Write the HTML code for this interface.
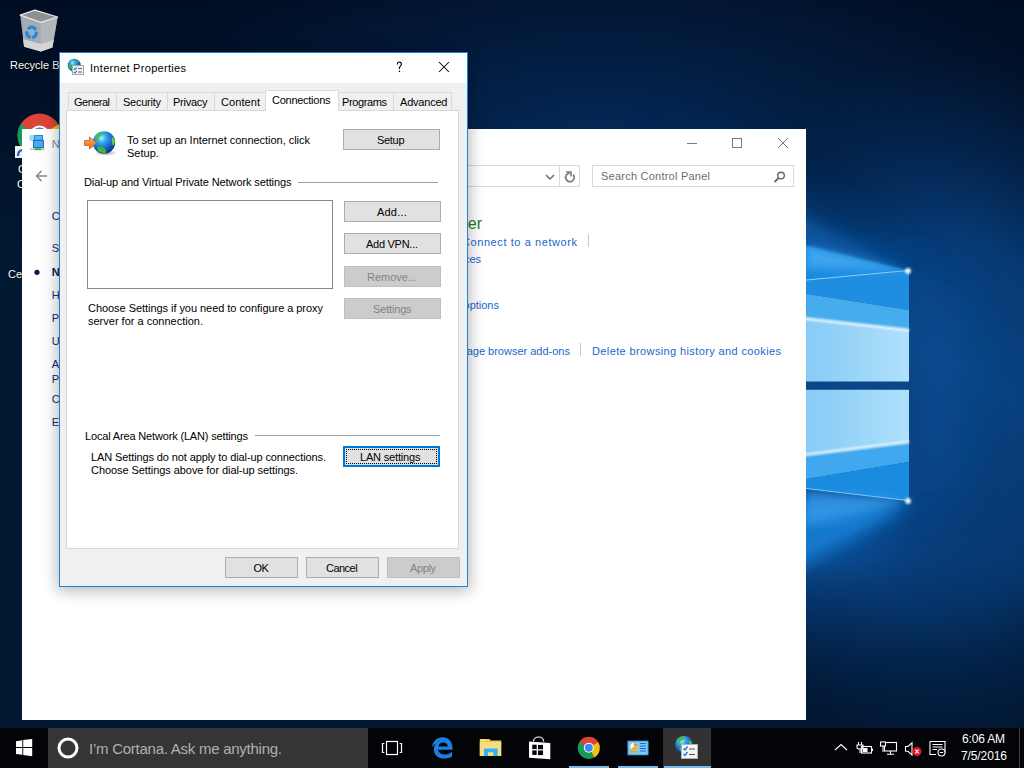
<!DOCTYPE html>
<html><head><meta charset="utf-8"><title>Internet Properties</title>
<style>
html,body{margin:0;padding:0;width:1024px;height:768px;overflow:hidden;background:#02122c;font-family:"Liberation Sans",sans-serif;}
.L{position:absolute;left:0;top:0;width:1024px;height:768px;}
.t{position:absolute;white-space:pre;font-family:"Liberation Sans",sans-serif;}
.b{position:absolute;box-sizing:border-box;}
svg{position:absolute;left:0;top:0;}
</style></head><body>
<!-- DESKTOP -->
<div class="L" id="desk">
<svg width="1024" height="768" viewBox="0 0 1024 768">
<defs>
<radialGradient id="bg1" cx="900" cy="420" r="720" gradientTransform="translate(900 420) scale(0.75 1) translate(-900 -420)" gradientUnits="userSpaceOnUse">
<stop offset="0" stop-color="#0a4688"/><stop offset="0.22" stop-color="#073872"/><stop offset="0.45" stop-color="#04244e"/><stop offset="0.7" stop-color="#02142e"/><stop offset="1" stop-color="#010b1e"/>
</radialGradient>
<filter id="blur2" x="-100%" y="-100%" width="300%" height="300%" filterUnits="objectBoundingBox"><feGaussianBlur stdDeviation="1.2"/></filter>
<filter id="blur8" x="-100%" y="-100%" width="300%" height="300%" filterUnits="objectBoundingBox"><feGaussianBlur stdDeviation="8"/></filter>
<filter id="blur40" x="-100%" y="-100%" width="300%" height="300%" filterUnits="objectBoundingBox"><feGaussianBlur stdDeviation="40"/></filter>
<filter id="blur4" x="-100%" y="-100%" width="300%" height="300%"><feGaussianBlur stdDeviation="4"/></filter>
<filter id="blur10" x="-100%" y="-100%" width="300%" height="300%"><feGaussianBlur stdDeviation="10"/></filter>
<filter id="blur20" x="-100%" y="-100%" width="300%" height="300%" filterUnits="objectBoundingBox"><feGaussianBlur stdDeviation="22"/></filter>
<linearGradient id="beamDown" x1="0" y1="0" x2="0" y2="1"><stop offset="0" stop-color="#1a86dc"/><stop offset="1" stop-color="#0a4f98" stop-opacity="0"/></linearGradient>
</defs>
<defs>
<radialGradient id="rg1" cx="940" cy="420" r="320" gradientTransform="translate(940 420) scale(0.85 1.15) translate(-940 -420)" gradientUnits="userSpaceOnUse"><stop offset="0" stop-color="#0a4a8c"/><stop offset="0.5" stop-color="#073e7c" stop-opacity="0.9"/><stop offset="1" stop-color="#03224e" stop-opacity="0"/></radialGradient>
<radialGradient id="rg2" cx="600" cy="160" r="420" gradientTransform="translate(600 160) scale(1.2 0.6) translate(-600 -160)" gradientUnits="userSpaceOnUse"><stop offset="0" stop-color="#052f64" stop-opacity="0.9"/><stop offset="1" stop-color="#03224e" stop-opacity="0"/></radialGradient>
<radialGradient id="rg3" cx="820" cy="520" r="230" gradientTransform="translate(820 520) scale(1.1 0.8) translate(-820 -520)" gradientUnits="userSpaceOnUse"><stop offset="0" stop-color="#0c5cac"/><stop offset="0.4" stop-color="#083f7e" stop-opacity="0.8"/><stop offset="1" stop-color="#042a5a" stop-opacity="0"/></radialGradient>
<linearGradient id="lgB" x1="0" y1="560" x2="0" y2="728" gradientUnits="userSpaceOnUse"><stop offset="0" stop-color="#011530" stop-opacity="0"/><stop offset="1" stop-color="#011530" stop-opacity="0.5"/></linearGradient>
</defs>
<linearGradient id="lgBase" x1="0" y1="0" x2="0" y2="260" gradientUnits="userSpaceOnUse"><stop offset="0" stop-color="#010d22"/><stop offset="1" stop-color="#011831"/></linearGradient>
<rect width="1024" height="768" fill="url(#lgBase)"/>
<rect width="1024" height="768" fill="url(#rg2)"/>
<rect width="1024" height="768" fill="url(#rg1)"/>
<rect width="1024" height="768" fill="url(#rg3)"/>
<rect x="700" y="560" width="324" height="168" fill="url(#lgB)"/>
<polygon points="909,272 700,140 600,200 909,300" fill="#0b5aa8" opacity="0.55" filter="url(#blur20)"/>
<!-- beams to the left of logo -->
<polygon points="909,271 700,170 700,250" fill="#0e62b5" opacity="0.7" filter="url(#blur8)"/>
<polygon points="909,265 960,290 960,480 909,510" fill="#0b52a0" opacity="0.45" filter="url(#blur20)"/>
<polygon points="909,501 700,500 700,625" fill="#1e88e4" opacity="0.85" filter="url(#blur10)"/>
<polygon points="700,220 909,270.4 700,300" fill="#1f90e8" opacity="0.95" filter="url(#blur2)"/>
<polygon points="700,512 909,500.7 700,610" fill="url(#beamDown)" filter="url(#blur8)"/>
<!-- upper pane -->
<polygon points="700,290 909,270.4 909,310 700,277" fill="#1f8ee0"/>
<polygon points="700,277 909,310 909,330 700,307" fill="#45acee"/>
<linearGradient id="lp" x1="806" y1="0" x2="909" y2="0" gradientUnits="userSpaceOnUse"><stop offset="0" stop-color="#86cbf6"/><stop offset="1" stop-color="#b0e0fb"/></linearGradient>
<polygon points="700,307 909,330 909,381.7 700,381.7" fill="url(#lp)"/>
<line x1="700" y1="307" x2="909" y2="330" stroke="#f0faff" stroke-width="2.6" filter="url(#blur2)"/>
<line x1="700" y1="290" x2="909" y2="270.4" stroke="#a8e0ff" stroke-width="1" opacity="0.8"/>
<rect x="700" y="381.7" width="209" height="8.1" fill="#0a4688"/>
<!-- lower pane -->
<polygon points="700,389.8 909,389.8 909,442 700,468" fill="url(#lp)"/>
<polygon points="700,468 909,442 909,462 700,497" fill="#40a8ee"/>
<polygon points="700,497 909,462 909,500.7 700,476" fill="#1a8ce0"/>
<line x1="700" y1="468" x2="909" y2="442" stroke="#f0faff" stroke-width="2.6" filter="url(#blur2)"/>
<line x1="700" y1="476" x2="909" y2="500.7" stroke="#a8e0ff" stroke-width="1" opacity="0.8"/>
<!-- right vertical edge -->
<line x1="909" y1="270" x2="909" y2="501" stroke="#cfefff" stroke-width="1.6" filter="url(#blur2)"/>
<circle cx="908" cy="271" r="3" fill="#fff" opacity="0.9" filter="url(#blur2)"/><polygon points="909,271 806,246 806,268" fill="#5ab8f5" opacity="0.55" filter="url(#blur4)"/><path d="M890,270.5 H925" stroke="#dff4ff" stroke-width="1" opacity="0.7" filter="url(#blur2)"/>
<circle cx="908" cy="501" r="3" fill="#fff" opacity="0.9" filter="url(#blur2)"/><polygon points="909,501 806,492 806,525" fill="#4aa8f0" opacity="0.5" filter="url(#blur4)"/><path d="M880,501 H930" stroke="#e8f8ff" stroke-width="1.5" opacity="0.8" filter="url(#blur2)"/>
<!-- recycle bin -->
<polygon points="20.2,15.1 34.9,10.2 57.6,17 52.4,47.6 40.7,51.5 24.1,46.7" fill="#a6aaaf"/>
<polygon points="40.7,22.3 57.6,17 52.4,47.6 40.7,51.5" fill="#b3b6ba"/>
<polygon points="20.2,15.1 34.9,10.2 57.6,17 40.7,22.3" fill="#8b9095"/>
<polygon points="23,39 40.7,44 53.6,40 52.4,47.6 40.7,51.5 24.1,46.7" fill="#d3d5d8"/>
<polygon points="20.2,15.1 34.9,10.2 57.6,17 40.7,22.3" fill="none" stroke="#e6e8ea" stroke-width="1.3" stroke-linejoin="round"/>
<g fill="none" stroke="#1a8ae8" stroke-width="3.2" stroke-linecap="round">
<path d="M28.8,28.2 A5,5 0 0 1 35.2,28.8"/>
<path d="M26.8,32.5 A5,5 0 0 0 29.5,37"/>
<path d="M33.5,37.3 A5,5 0 0 0 36.3,33.2"/>
</g>
<!-- chrome icon (partial) -->
<circle cx="39.5" cy="135.5" r="22" fill="#db4437"/>
<path d="M39.5,135.5 L58.5,124.5 A22,22 0 0 1 50.5,154.5 Z" fill="#f4c20d"/>
<path d="M39.5,135.5 L50.5,154.5 A22,22 0 0 1 20.5,124.5 Z" fill="#0f9d58"/>
<circle cx="39.5" cy="135.5" r="10" fill="#fff"/>
<circle cx="39.5" cy="135.5" r="8" fill="#4a7fd8"/>
<!-- shortcut overlay -->
<rect x="15" y="146" width="8" height="12" fill="#f0f0f0"/>
<path d="M18,156 q0,-5 4,-6" stroke="#1e5bb8" stroke-width="2.2" fill="none"/>
<!-- desktop side letters -->
</svg>
<div class="t" style="left:10px;top:60px;font-size:11px;line-height:11px;color:#fff;text-shadow:0 0 2px #000,1px 1px 1px #000;">Recycle Bin</div>
<div class="t" style="left:18px;top:164px;font-size:11px;line-height:11px;color:#fff;text-shadow:0 0 2px #000;">Google</div>
<div class="t" style="left:17px;top:179px;font-size:11px;line-height:11px;color:#fff;text-shadow:0 0 2px #000;">Chrome</div>
<div class="t" style="left:8px;top:269px;font-size:11px;line-height:11px;color:#fff;text-shadow:0 0 2px #000;">Certificates</div>
</div>
<!-- CONTROL PANEL -->
<div class="L" id="cp" style="clip-path:inset(129px 218px 48px 22px);">
<div class="b" style="left:22px;top:129px;width:784px;height:591px;background:#fff;"></div>
<svg width="1024" height="768" style="left:0;top:0">
<!-- cp title icon -->
<circle cx="32.5" cy="138" r="3.2" fill="#8fd0f4" opacity="0.9"/>
<rect x="34.5" y="135.5" width="8" height="4.5" fill="#5ab8f2" stroke="#2a84d6"/>
<rect x="33.5" y="140.5" width="10" height="7" fill="#4aa8ee" stroke="#1e70c8"/>
<rect x="30" y="148.3" width="15" height="1.8" fill="#c8c8c8"/>
<rect x="34.5" y="148.3" width="7" height="1.8" fill="#36b336"/>
<!-- back arrow -->
<path d="M36.5,176 H47 M41.5,171 L36.5,176 L41.5,181" stroke="#8a8a8a" stroke-width="1.6" fill="none"/>
<!-- title buttons -->
<path d="M687,143.5 H697" stroke="#7a7a7a" stroke-width="1"/>
<rect x="732.5" y="138.5" width="9" height="9" fill="none" stroke="#7a7a7a" stroke-width="1"/>
<path d="M778,138 L788,148 M788,138 L778,148" stroke="#7a7a7a" stroke-width="1"/>
<!-- address bar -->
<rect x="100.5" y="165.5" width="479" height="21" fill="#fff" stroke="#d9d9d9"/>
<path d="M559.5,166 V186" stroke="#d9d9d9"/>
<path d="M546,175 L550,179 L554,175" stroke="#6a6a6a" stroke-width="1.5" fill="none"/>
<path d="M573.2,174.6 A4.3,4.3 0 1 1 569.6,173.1" stroke="#7a7a7a" stroke-width="1.7" fill="none"/>
<path d="M566.2,172 H571 V176.5" stroke="#7a7a7a" stroke-width="1.5" fill="none"/>
<!-- search box -->
<rect x="592.5" y="165.5" width="201" height="21" fill="#fff" stroke="#d9d9d9"/>
<circle cx="781" cy="175.5" r="3.3" stroke="#6a6a6a" stroke-width="1.5" fill="none"/>
<path d="M778.6,178 L774.5,182" stroke="#6a6a6a" stroke-width="1.8"/>
<!-- separators -->
<path d="M588.5,234 V247 M580.5,343 V356" stroke="#c8c8c8"/>
<!-- nav bullet -->
<circle cx="37" cy="272.3" r="2.6" fill="#141450"/>
</svg>
<div class="t" style="left:51.8px;top:139px;font-size:11px;line-height:11px;color:#8a8a8a;">Network and Internet</div>
<div class="t" style="left:51.8px;top:211px;font-size:11px;line-height:11px;color:#20246e;letter-spacing:-0.4px;">Control Panel Home</div>
<div class="t" style="left:51.8px;top:243px;font-size:11px;line-height:11px;color:#20246e;letter-spacing:-0.4px;">System and Security</div>
<div class="t" style="left:51.8px;top:267px;font-size:11px;line-height:11px;color:#141450;font-weight:bold;">Network and Internet</div>
<div class="t" style="left:51.8px;top:290px;font-size:11px;line-height:11px;color:#20246e;letter-spacing:-0.4px;">Hardware and Sound</div>
<div class="t" style="left:51.8px;top:313px;font-size:11px;line-height:11px;color:#20246e;letter-spacing:-0.4px;">Programs</div>
<div class="t" style="left:51.8px;top:336px;font-size:11px;line-height:11px;color:#20246e;letter-spacing:-0.4px;">User Accounts</div>
<div class="t" style="left:51.8px;top:359px;font-size:11px;line-height:11px;color:#20246e;letter-spacing:-0.4px;">Appearance and</div>
<div class="t" style="left:51.8px;top:374px;font-size:11px;line-height:11px;color:#20246e;letter-spacing:-0.4px;">Personalization</div>
<div class="t" style="left:51.8px;top:394px;font-size:11px;line-height:11px;color:#20246e;letter-spacing:-0.4px;">Clock, Language, and Region</div>
<div class="t" style="left:51.8px;top:417px;font-size:11px;line-height:11px;color:#20246e;letter-spacing:-0.4px;">Ease of Access</div>
<div class="t" style="right:542px;top:216px;font-size:16px;line-height:16px;color:#1e7b1e;">Network and Sharing Center</div>
<div class="t" style="left:462px;top:237px;font-size:11px;line-height:11px;color:#1a66d0;letter-spacing:0.581px;">Connect to a network</div>
<div class="t" style="right:543px;top:254px;font-size:11px;line-height:11px;color:#1a66d0;">View network computers and devices</div>
<div class="t" style="right:525px;top:300px;font-size:11px;line-height:11px;color:#1a66d0;">Choose homegroup and sharing options</div>
<div class="t" style="right:454px;top:346px;font-size:11px;line-height:11px;color:#1a66d0;">Manage browser add-ons</div>
<div class="t" style="left:592px;top:346px;font-size:11px;line-height:11px;color:#1a66d0;letter-spacing:0.380px;">Delete browsing history and cookies</div>
<div class="t" style="left:601px;top:171px;font-size:11px;line-height:11px;color:#6d6d6d;letter-spacing:0.234px;">Search Control Panel</div>
</div>
<!-- DIALOG -->
<div class="b" style="left:59px;top:52px;width:409px;height:535px;box-shadow:0 2px 14px 2px rgba(0,0,0,0.28);"></div>
<div class="L" id="dlg">
<div class="b" style="left:59px;top:52px;width:409px;height:535px;border:1px solid #1883d7;background:#f0f0f0;"></div>
<div class="b" style="left:60px;top:53px;width:407px;height:30px;background:#fff;"></div>
<!-- title icon -->
<svg width="1024" height="768" style="left:0;top:0">
<defs>
<radialGradient id="gl" cx="0.38" cy="0.32" r="0.7"><stop offset="0" stop-color="#9ee6ff"/><stop offset="0.35" stop-color="#2aa0e8"/><stop offset="0.8" stop-color="#1450b0"/><stop offset="1" stop-color="#0b2f7a"/></radialGradient>
<linearGradient id="arr" x1="0" y1="0" x2="0" y2="1"><stop offset="0" stop-color="#ffb070"/><stop offset="1" stop-color="#e8661a"/></linearGradient>
</defs>
<!-- title globe -->
<circle cx="74.2" cy="65.2" r="6.5" fill="url(#gl)"/>
<path d="M68.5,66 q1.5,-2 3.5,-1 q1,2 0,4 q-2,1 -3,-1z M75,60 q3,0 4,2 q-1,1 -3,0z" fill="#3cb43c"/>
<rect x="72.5" y="65.5" width="11" height="9" fill="#f0f0f0" stroke="#a8a8a8"/>
<path d="M74,68.5 l1,1 l1.8,-2.2 M74,72 l1,1 l1.8,-2.2" stroke="#1e7ad8" stroke-width="1.1" fill="none"/>
<path d="M78,68.5h4 M78,72h4" stroke="#6a6a6a" stroke-width="1"/>
<!-- help ? -->
<path d="M397.3,64.6 C397.3,62.8 398.3,62 399.4,62 C400.6,62 401.4,62.9 401.4,64.2 C401.4,65.7 399.4,66.3 399.4,68.2 L399.4,69" stroke="#000" stroke-width="1.1" fill="none"/>
<rect x="398.8" y="70.6" width="1.3" height="1.4" fill="#000"/>
<!-- close X -->
<path d="M439,62 L449,72 M449,62 L439,72" stroke="#000" stroke-width="1.05"/>
</svg>
<!-- tabs -->
<div class="b" style="left:68px;top:92px;width:49px;height:19px;border:1px solid #d9d9d9;border-bottom:0;background:#f0f0f0;"></div>
<div class="b" style="left:116px;top:92px;width:52px;height:19px;border:1px solid #d9d9d9;border-bottom:0;background:#f0f0f0;"></div>
<div class="b" style="left:167px;top:92px;width:48px;height:19px;border:1px solid #d9d9d9;border-bottom:0;background:#f0f0f0;"></div>
<div class="b" style="left:214px;top:92px;width:52px;height:19px;border:1px solid #d9d9d9;border-bottom:0;background:#f0f0f0;"></div>
<div class="b" style="left:338px;top:92px;width:56px;height:19px;border:1px solid #d9d9d9;border-bottom:0;background:#f0f0f0;"></div>
<div class="b" style="left:393px;top:92px;width:59px;height:19px;border:1px solid #d9d9d9;border-bottom:0;background:#f0f0f0;"></div>
<div class="b" style="left:66px;top:110px;width:393px;height:439px;border:1px solid #d9d9d9;background:#fff;"></div>
<div class="b" style="left:265px;top:90px;width:74px;height:21px;border:1px solid #d9d9d9;border-bottom:0;background:#fff;"></div>
<!-- setup globe -->
<svg width="1024" height="768" style="left:0;top:0">
<defs>
<radialGradient id="gl2" cx="0.38" cy="0.3" r="0.75"><stop offset="0" stop-color="#b0f0ff"/><stop offset="0.3" stop-color="#30a8ea"/><stop offset="0.75" stop-color="#1550b8"/><stop offset="1" stop-color="#0a2a78"/></radialGradient>
<radialGradient id="sh" cx="0.5" cy="0.5" r="0.5"><stop offset="0" stop-color="#000" stop-opacity="0.35"/><stop offset="1" stop-color="#000" stop-opacity="0"/></radialGradient>
</defs>
<ellipse cx="106" cy="153" rx="12" ry="3" fill="url(#sh)"/>
<circle cx="104" cy="142.5" r="11.2" fill="url(#gl2)"/>
<path d="M95,137 q3,-5 7,-5 q2,2 -1,4 q-3,1 -2,4 q-2,1 -4,-3z" fill="#44c040" opacity="0.9"/>
<path d="M97,147 q4,-1 7,1 q3,2 2,5 q-4,1 -8,-2z" fill="#3fb43a"/>
<path d="M112,137 q3,1 3,5 q-1,3 -2,4 q-2,-4 -1,-9z" fill="#5ccc40"/>
<path d="M84.5,140.5 h5 v-3.5 l7,6 l-7,6 v-3.5 h-5z" fill="url(#arr)" stroke="#d0581a" stroke-width="0.8"/>
</svg>
<!-- setup text row / separators -->
<div class="b" style="left:298px;top:182px;width:140px;height:1px;background:#a0a0a0;"></div>
<div class="b" style="left:255px;top:435px;width:185px;height:1px;background:#a0a0a0;"></div>
<!-- list box -->
<div class="b" style="left:87px;top:200px;width:246px;height:89px;border:1px solid #828790;background:#fff;"></div>
<!-- buttons -->
<div class="b" style="left:343px;top:129px;width:97px;height:21px;border:1px solid #adadad;background:#e1e1e1;"></div>
<div class="b" style="left:344px;top:201px;width:97px;height:21px;border:1px solid #adadad;background:#e1e1e1;"></div>
<div class="b" style="left:344px;top:233px;width:97px;height:21px;border:1px solid #adadad;background:#e1e1e1;"></div>
<div class="b" style="left:344px;top:266px;width:97px;height:21px;border:1px solid #bfbfbf;background:#cccccc;"></div>
<div class="b" style="left:344px;top:298px;width:97px;height:21px;border:1px solid #bfbfbf;background:#cccccc;"></div>
<div class="b" style="left:343px;top:446px;width:97px;height:21px;border:2px solid #0078d7;background:#e1e1e1;"></div>
<div class="b" style="left:346px;top:449px;width:91px;height:15px;border:1px dotted #000;"></div>
<div class="b" style="left:225px;top:557px;width:73px;height:21px;border:1px solid #adadad;background:#e1e1e1;"></div>
<div class="b" style="left:306px;top:557px;width:73px;height:21px;border:1px solid #adadad;background:#e1e1e1;"></div>
<div class="b" style="left:387px;top:557px;width:73px;height:21px;border:1px solid #bfbfbf;background:#cccccc;"></div>
<div class="t" style="left:90px;top:63px;font-size:11px;line-height:11px;color:#000;letter-spacing:0.306px;">Internet Properties</div>
<div class="t" style="left:74px;top:97px;font-size:11px;line-height:11px;color:#000;letter-spacing:-0.523px;">General</div>
<div class="t" style="left:123px;top:97px;font-size:11px;line-height:11px;color:#000;letter-spacing:-0.250px;">Security</div>
<div class="t" style="left:173px;top:97px;font-size:11px;line-height:11px;color:#000;letter-spacing:-0.260px;">Privacy</div>
<div class="t" style="left:221px;top:97px;font-size:11px;line-height:11px;color:#000;letter-spacing:0.078px;">Content</div>
<div class="t" style="left:272px;top:95px;font-size:11px;line-height:11px;color:#000;letter-spacing:-0.266px;">Connections</div>
<div class="t" style="left:342px;top:97px;font-size:11px;line-height:11px;color:#000;letter-spacing:-0.384px;">Programs</div>
<div class="t" style="left:400px;top:97px;font-size:11px;line-height:11px;color:#000;letter-spacing:-0.205px;">Advanced</div>
<div class="t" style="left:127px;top:135px;font-size:11px;line-height:11px;color:#000;letter-spacing:-0.028px;">To set up an Internet connection, click</div>
<div class="t" style="left:127px;top:148px;font-size:11px;line-height:11px;color:#000;">Setup.</div>
<div class="t" style="left:377px;top:135px;font-size:11px;line-height:11px;color:#000;letter-spacing:-0.312px;">Setup</div>
<div class="t" style="left:84px;top:177px;font-size:11px;line-height:11px;color:#000;letter-spacing:-0.104px;">Dial-up and Virtual Private Network settings</div>
<div class="t" style="left:377px;top:207px;font-size:11px;line-height:11px;color:#000;letter-spacing:0.190px;">Add...</div>
<div class="t" style="left:366px;top:239px;font-size:11px;line-height:11px;color:#000;letter-spacing:-0.269px;">Add VPN...</div>
<div class="t" style="left:367px;top:272px;font-size:11px;line-height:11px;color:#838383;letter-spacing:-0.018px;">Remove...</div>
<div class="t" style="left:373px;top:304px;font-size:11px;line-height:11px;color:#838383;letter-spacing:-0.164px;">Settings</div>
<div class="t" style="left:88px;top:303px;font-size:11px;line-height:11px;color:#000;letter-spacing:-0.048px;">Choose Settings if you need to configure a proxy</div>
<div class="t" style="left:88px;top:316px;font-size:11px;line-height:11px;color:#000;">server for a connection.</div>
<div class="t" style="left:85px;top:431px;font-size:11px;line-height:11px;color:#000;letter-spacing:-0.161px;">Local Area Network (LAN) settings</div>
<div class="t" style="left:91px;top:452px;font-size:11px;line-height:11px;color:#000;letter-spacing:-0.111px;">LAN Settings do not apply to dial-up connections.</div>
<div class="t" style="left:91px;top:465px;font-size:11px;line-height:11px;color:#000;letter-spacing:-0.065px;">Choose Settings above for dial-up settings.</div>
<div class="t" style="left:360px;top:452px;font-size:11px;line-height:11px;color:#000;letter-spacing:-0.170px;">LAN settings</div>
<div class="t" style="left:253.5px;top:563px;font-size:11px;line-height:11px;color:#000;letter-spacing:-0.6px;">OK</div>
<div class="t" style="left:326px;top:563px;font-size:11px;line-height:11px;color:#000;letter-spacing:-0.530px;">Cancel</div>
<div class="t" style="left:410px;top:563px;font-size:11px;line-height:11px;color:#838383;letter-spacing:-0.383px;">Apply</div>
</div>
<!-- TASKBAR -->
<div class="L" id="task">
<div class="b" style="left:0;top:728px;width:1024px;height:40px;background:#020408;"></div>
<div class="b" style="left:48px;top:728px;width:320px;height:40px;background:#353535;"></div>
<div class="b" style="left:663px;top:728px;width:48px;height:40px;background:#323232;"></div>
<div class="b" style="left:569px;top:766px;width:40px;height:2px;background:#76b9ed;"></div>
<div class="b" style="left:618px;top:766px;width:40px;height:2px;background:#76b9ed;"></div>
<div class="b" style="left:664px;top:766px;width:47px;height:2px;background:#76b9ed;"></div>
<svg width="1024" height="768" style="left:0;top:0">
<!-- start -->
<g fill="#fff">
<polygon points="16,741.2 22.3,740.3 22.3,747 16,747"/>
<polygon points="23.2,740.1 32.2,738.9 32.2,747 23.2,747"/>
<polygon points="16,748 22.3,748 22.3,754.8 16,754"/>
<polygon points="23.2,748 32.2,748 32.2,756.2 23.2,755"/>
</g>
<!-- cortana -->
<circle cx="68" cy="748" r="9" fill="none" stroke="#fff" stroke-width="3"/>
<!-- task view -->
<rect x="386.5" y="741.5" width="11" height="13" fill="none" stroke="#fff" stroke-width="1.2"/>
<path d="M384.3,743.5 H382.5 V752.5 H384.3 M399.7,743.5 H401.5 V752.5 H399.7" fill="none" stroke="#fff" stroke-width="1.2"/>
<!-- edge -->
<path fill-rule="evenodd" fill="#1a7fe0" d="M432,747.5 C432.5,741 437,737.2 442.5,737.2 C448.5,737.2 452.5,741.5 452.5,747.5 L452.5,749.8 L438,749.8 C438.8,753 441,754.6 444.5,754.6 C447,754.6 449.5,753.6 452,752 L452,756.6 C449.5,758 447,758.6 443.8,758.6 C437.5,758.6 433.8,754.5 433.8,749 C433.8,746.5 434.5,745 436,743.5 C434.5,744.2 433,745.5 432,747.5 Z M438.5,746.6 H447.8 C447.5,744 445.8,742.6 443.2,742.6 C440.6,742.6 438.9,744 438.5,746.6 Z"/>
<!-- explorer -->
<path d="M479.8,739 H489.5 L490.5,740.5 H501.2 V756 H479.8 Z" fill="#f0c659"/>
<path d="M479.8,742 H501.2 V756 H479.8Z" fill="#f8dc84"/>
<rect x="480.5" y="739.6" width="5" height="1.2" fill="#fff" opacity="0.6"/>
<path d="M484,748.5 H497.6 V756 H493.5 V752.3 H488 V756 H484 Z" fill="#2ab6f4"/>
<!-- store -->
<path d="M533.5,741.5 C533.5,735.5 543.7,735.5 543.7,741.5" fill="none" stroke="#fff" stroke-width="1.2"/>
<path d="M529,741.5 L550.3,743 V759.3 L529,757.8 Z" fill="#fff"/>
<g fill="#020408">
<rect x="532.3" y="744.7" width="4.4" height="4.4"/>
<rect x="538" y="744.9" width="5" height="4.4"/>
<rect x="532.3" y="750.4" width="4.4" height="4.5"/>
<rect x="538" y="750.5" width="5" height="4.6"/>
</g>
<!-- chrome -->
<circle cx="588.8" cy="747.8" r="11" fill="#db4437"/>
<path d="M588.8,747.8 L598.3,742.3 A11,11 0 0 1 594.3,757.3 Z" fill="#f4c20d"/>
<path d="M588.8,747.8 L594.3,757.3 A11,11 0 0 1 579.3,742.3 Z" fill="#0f9d58"/>
<circle cx="588.8" cy="747.8" r="5" fill="#fff"/>
<circle cx="588.8" cy="747.8" r="4" fill="#4285f4"/>
<!-- control panel -->
<rect x="627.5" y="740.7" width="21" height="14.6" fill="#3ca6e6"/>
<rect x="628.5" y="741.7" width="19" height="12.6" fill="#7ccbf4"/>
<circle cx="634" cy="746.5" r="3.6" fill="#fff"/>
<path d="M634,746.5 V742.9 A3.6,3.6 0 0 1 637.6,746.5 Z" fill="#f08a20"/>
<path d="M634,746.5 L637.6,746.5 A3.6,3.6 0 0 1 631,748.5 Z" fill="#f0b020"/>
<path d="M640,743.5 h6 M640,746 h6 M640,748.5 h6 M640,751 h6" stroke="#1e6ad0" stroke-width="1"/>
<rect x="629.5" y="751" width="9" height="1.5" fill="#f0a020"/>
<!-- internet properties -->
<circle cx="684" cy="744.5" r="8.8" fill="url(#gl2)"/>
<path d="M677,741 q3,-5 7,-4 q1,2 -2,3.5 q-3,1 -2,3 q-2,1 -3,-2.5z M679,748 q4,-1 6,2 q1,3 -1,4 q-3,-1 -5,-6z M689,740 q3,1 3,4 q-1,3 -2,3 q-2,-3 -1,-7z" fill="#44c040"/>
<rect x="681.5" y="744.5" width="16" height="14" fill="#f4f4f4" stroke="#b0b0b0"/>
<path d="M683.5,748.5 l1.5,1.5 l2.5,-3.5 M683.5,754 l1.5,1.5 l2.5,-3.5" stroke="#1e7ad8" stroke-width="1.4" fill="none"/>
<path d="M689,749 h6 M689,754.5 h6" stroke="#555" stroke-width="1.2"/>
<!-- tray chevron -->
<path d="M835,750 L841,744.5 L847,750" fill="none" stroke="#fff" stroke-width="1.1"/>
<!-- power -->
<path d="M858.5,742 V745 M861.5,742 V745 M857,745 H863 V747.5 C863,749.5 857,749.5 857,747.5 Z M860,749.5 V753" fill="none" stroke="#fff" stroke-width="1.1"/>
<rect x="861.5" y="746.5" width="10" height="6.5" fill="none" stroke="#fff" stroke-width="1.1"/>
<rect x="862.5" y="748" width="5" height="4" fill="#fff"/>
<rect x="871.5" y="748.5" width="1.5" height="2.5" fill="#fff"/>
<!-- network -->
<rect x="884.5" y="742.5" width="12" height="8.5" fill="none" stroke="#fff" stroke-width="1.1"/>
<path d="M890.5,751 V754 M887,754.3 H894" stroke="#fff" stroke-width="1.1"/>
<rect x="880.5" y="742" width="5" height="4" fill="#020408" stroke="#fff" stroke-width="1.1"/>
<path d="M883,746 V752" stroke="#fff" stroke-width="1"/>
<!-- volume -->
<path d="M905.5,746.5 H908 L912,742.8 V755 L908,751.3 H905.5 Z" fill="none" stroke="#fff" stroke-width="1.1"/>
<circle cx="917" cy="751.5" r="4.5" fill="#e81123"/>
<path d="M915.2,749.7 L918.8,753.3 M918.8,749.7 L915.2,753.3" stroke="#fff" stroke-width="1.1"/>
<!-- action center -->
<path d="M930,741.5 H945 V752 H941" fill="none" stroke="#fff" stroke-width="1.1"/>
<path d="M930,741.5 V754.5 H936" fill="none" stroke="#fff" stroke-width="1.1"/>
<path d="M932.5,744.5 H942.5 M932.5,747 H942.5 M932.5,749.5 H937" stroke="#fff" stroke-width="1"/>
<circle cx="941.5" cy="752.5" r="3.5" fill="#020408" stroke="#fff" stroke-width="1.1"/>
<path d="M939.8,752.5 H943.2" stroke="#fff" stroke-width="1"/>
<!-- show desktop separator -->
<path d="M1019.5,728 V768" stroke="#3c3c3c" stroke-width="1"/>
</svg>
<div class="t" style="left:89px;top:741px;font-size:15px;line-height:15px;color:#b0b0b0;letter-spacing:-0.253px;">I’m Cortana. Ask me anything.</div>
<div class="t" style="left:962px;top:733px;font-size:12px;line-height:12px;color:#fff;letter-spacing:-0.172px;">6:06 AM</div>
<div class="t" style="left:961px;top:750px;font-size:12px;line-height:12px;color:#fff;letter-spacing:-0.103px;">7/5/2016</div>
</div>
</body></html>
